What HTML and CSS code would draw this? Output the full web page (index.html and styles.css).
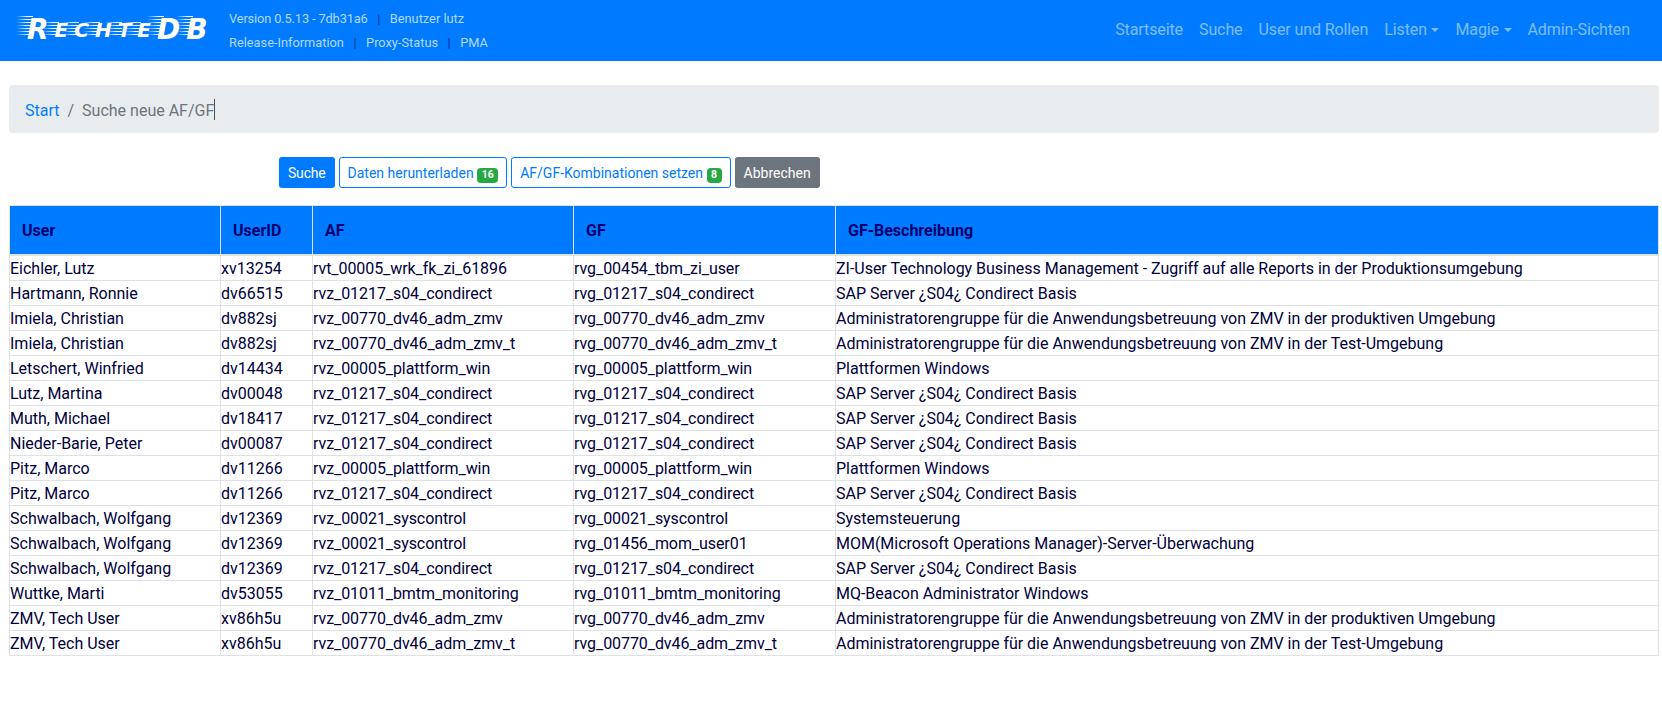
FILE: index.html
```html
<!DOCTYPE html>
<html lang="de">
<head>
  <meta charset="UTF-8">
  <title>RechteDB</title>
  <link rel="stylesheet" href="styles.css">
</head>
<body>

<nav class="navbar">
  <a class="logo" href="#"><span class="big">R</span><span>E</span><span>C</span><span>H</span><span>T</span><span>E</span><span class="big">D</span><span class="big">B</span></a>
  <div class="meta">
    <div class="meta-row">
      <a href="#" class="version">Version 0.5.13 - 7db31a6</a><i>|</i><a href="#">Benutzer lutz</a>
    </div>
    <div class="meta-row">
      <a href="#">Release-Information</a><i>|</i><a href="#">Proxy-Status</a><i>|</i><a href="#">PMA</a>
    </div>
  </div>
  <ul class="nav">
    <li><a href="#">Startseite</a></li>
    <li><a href="#">Suche</a></li>
    <li><a href="#">User und Rollen</a></li>
    <li><a href="#" class="caret">Listen</a></li>
    <li><a href="#" class="caret">Magie</a></li>
    <li><a href="#">Admin-Sichten</a></li>
  </ul>
</nav>

<main>
  <div class="breadcrumb">
    <a href="#">Start</a>
    <span class="sep">/</span>
    <span class="current">Suche neue AF/GF</span>
  </div>

  <div class="toolbar">
    <button class="btn btn-primary">Suche</button>
    <button class="btn btn-outline">Daten herunterladen <span class="badge">16</span></button>
    <button class="btn btn-outline">AF/GF-Kombinationen setzen <span class="badge">8</span></button>
    <button class="btn btn-grey">Abbrechen</button>
  </div>

  <table class="results">
    <thead>
      <tr>
        <th class="c-user">User</th>
        <th class="c-id">UserID</th>
        <th class="c-af">AF</th>
        <th class="c-gf">GF</th>
        <th>GF-Beschreibung</th>
      </tr>
    </thead>
    <tbody>
      <tr><td>Eichler, Lutz</td><td>xv13254</td><td>rvt_00005_wrk_fk_zi_61896</td><td>rvg_00454_tbm_zi_user</td><td>ZI-User Technology Business Management - Zugriff auf alle Reports in der Produktionsumgebung</td></tr>
      <tr><td>Hartmann, Ronnie</td><td>dv66515</td><td>rvz_01217_s04_condirect</td><td>rvg_01217_s04_condirect</td><td>SAP Server ¿S04¿ Condirect Basis</td></tr>
      <tr><td>Imiela, Christian</td><td>dv882sj</td><td>rvz_00770_dv46_adm_zmv</td><td>rvg_00770_dv46_adm_zmv</td><td>Administratorengruppe für die Anwendungsbetreuung von ZMV in der produktiven Umgebung</td></tr>
      <tr><td>Imiela, Christian</td><td>dv882sj</td><td>rvz_00770_dv46_adm_zmv_t</td><td>rvg_00770_dv46_adm_zmv_t</td><td>Administratorengruppe für die Anwendungsbetreuung von ZMV in der Test-Umgebung</td></tr>
      <tr><td>Letschert, Winfried</td><td>dv14434</td><td>rvz_00005_plattform_win</td><td>rvg_00005_plattform_win</td><td>Plattformen Windows</td></tr>
      <tr><td>Lutz, Martina</td><td>dv00048</td><td>rvz_01217_s04_condirect</td><td>rvg_01217_s04_condirect</td><td>SAP Server ¿S04¿ Condirect Basis</td></tr>
      <tr><td>Muth, Michael</td><td>dv18417</td><td>rvz_01217_s04_condirect</td><td>rvg_01217_s04_condirect</td><td>SAP Server ¿S04¿ Condirect Basis</td></tr>
      <tr><td>Nieder-Barie, Peter</td><td>dv00087</td><td>rvz_01217_s04_condirect</td><td>rvg_01217_s04_condirect</td><td>SAP Server ¿S04¿ Condirect Basis</td></tr>
      <tr><td>Pitz, Marco</td><td>dv11266</td><td>rvz_00005_plattform_win</td><td>rvg_00005_plattform_win</td><td>Plattformen Windows</td></tr>
      <tr><td>Pitz, Marco</td><td>dv11266</td><td>rvz_01217_s04_condirect</td><td>rvg_01217_s04_condirect</td><td>SAP Server ¿S04¿ Condirect Basis</td></tr>
      <tr><td>Schwalbach, Wolfgang</td><td>dv12369</td><td>rvz_00021_syscontrol</td><td>rvg_00021_syscontrol</td><td>Systemsteuerung</td></tr>
      <tr><td>Schwalbach, Wolfgang</td><td>dv12369</td><td>rvz_00021_syscontrol</td><td>rvg_01456_mom_user01</td><td>MOM(Microsoft Operations Manager)-Server-Überwachung</td></tr>
      <tr><td>Schwalbach, Wolfgang</td><td>dv12369</td><td>rvz_01217_s04_condirect</td><td>rvg_01217_s04_condirect</td><td>SAP Server ¿S04¿ Condirect Basis</td></tr>
      <tr><td>Wuttke, Marti</td><td>dv53055</td><td>rvz_01011_bmtm_monitoring</td><td>rvg_01011_bmtm_monitoring</td><td>MQ-Beacon Administrator Windows</td></tr>
      <tr><td>ZMV, Tech User</td><td>xv86h5u</td><td>rvz_00770_dv46_adm_zmv</td><td>rvg_00770_dv46_adm_zmv</td><td>Administratorengruppe für die Anwendungsbetreuung von ZMV in der produktiven Umgebung</td></tr>
      <tr><td>ZMV, Tech User</td><td>xv86h5u</td><td>rvz_00770_dv46_adm_zmv_t</td><td>rvg_00770_dv46_adm_zmv_t</td><td>Administratorengruppe für die Anwendungsbetreuung von ZMV in der Test-Umgebung</td></tr>
    </tbody>
  </table>
</main>

</body>
</html>
```
FILE: styles.css
```css
* {
  box-sizing: border-box;
}
body {
  margin: 0;
  font-family: Roboto, "Liberation Sans", sans-serif;
  font-size: 16px;
  line-height: 24px;
  color: #00003c;
  background: #fff;
}
a {
  text-decoration: none;
}
.navbar {
  display: flex;
  align-items: center;
  height: 61px;
  padding: 0 24px 2px 15px;
  background: #007bff;
}
.logo {
  display: flex;
  flex: none;
  width: 190px;
  height: 22px;
  align-items: flex-end;
  gap: 6px;
  padding-left: 12px;
  font-family: "DejaVu Sans", sans-serif;
  font-style: italic;
  font-weight: bold;
  font-size: 20px;
  line-height: 22px;
  color: #fff;
}
.logo span {
  position: relative;
  z-index: 1;
}
.logo .big {
  font-size: 28px;
}
/* speed lines to the left of each letter */
.logo span::before {
  content: "";
  position: absolute;
  z-index: -1;
  right: 70%;
  bottom: 4px;
  height: 15px;
  width: 17px;
  background: repeating-linear-gradient(#fff 0 1px, transparent 1px 3px);
  -webkit-mask-image: linear-gradient(to right, transparent, #000 70%);
  mask-image: linear-gradient(to right, transparent, #000 70%);
}
.logo .big::before {
  height: 21px;
}
.meta {
  margin: 2px 0 0 24px;
  font-size: 12.8px;
  line-height: 24px;
}
.meta-row a {
  color: #b3d7ff;
}
.meta-row .version {
  letter-spacing: -0.13px;
}
.meta-row i {
  font-style: normal;
  color: #00308f;
  margin: 0 9.5px;
}
.nav {
  display: flex;
  margin: 0 0 0 auto;
  padding: 0;
  list-style: none;
  letter-spacing: -0.1px;
}
.nav a {
  display: block;
  padding: 8px;
  color: rgba(255, 255, 255, 0.5);
}
.caret::after {
  content: "";
  display: inline-block;
  margin-left: 4.5px;
  vertical-align: 3px;
  border-top: 4.8px solid;
  border-left: 4.8px solid transparent;
  border-right: 4.8px solid transparent;
}
main {
  padding: 24px 3px 0 9px;
}
.breadcrumb {
  display: flex;
  height: 48px;
  padding: 14px 16px 10px;
  background: #e9ecef;
  border-radius: 4px;
}
.breadcrumb a {
  color: #007bff;
}
.sep {
  padding: 0 8px;
  color: #6c757d;
}
.current {
  height: 21px;
  color: #6c757d;
  border-right: 1px solid #495057;
}
.toolbar {
  display: flex;
  gap: 4px;
  margin-top: 24px;
  padding-left: 270px;
}
.btn {
  height: 31px;
  padding: 5px 8px 3px;
  font-family: inherit;
  font-size: 14px;
  line-height: 21px;
  border: 1px solid transparent;
  border-radius: 3px;
}
.btn-primary {
  color: #fff;
  background: #007bff;
  letter-spacing: -0.2px;
}
.btn-outline {
  color: #007bff;
  background: #fff;
  border-color: #007bff;
}
.btn-grey {
  color: #fff;
  background: #6c757d;
}
.badge {
  display: inline-block;
  padding: 2px 4.5px;
  font-size: 10.5px;
  font-weight: bold;
  line-height: 1;
  color: #fff;
  background: #28a745;
  border-radius: 4px;
}
.results {
  width: 100%;
  margin-top: 17px;
  border-collapse: collapse;
  table-layout: fixed;
}
.results th,
.results td {
  border: 1px solid #dee2e6;
  text-align: left;
}
.results th {
  height: 48px;
  padding: 13px 12px 11px;
  color: #00006e;
  background: #007bff;
  border-bottom-width: 2px;
}
.results td {
  height: 25px;
  padding: 2px 0 0;
  line-height: 22px;
}
.results td:nth-child(3),
.results td:nth-child(4) {
  letter-spacing: -0.07px;
}
.results td:nth-child(5) {
  letter-spacing: -0.02px;
}
.c-user {
  width: 211px;
}
.c-id {
  width: 92px;
}
.c-af {
  width: 261px;
}
.c-gf {
  width: 262px;
}
```
